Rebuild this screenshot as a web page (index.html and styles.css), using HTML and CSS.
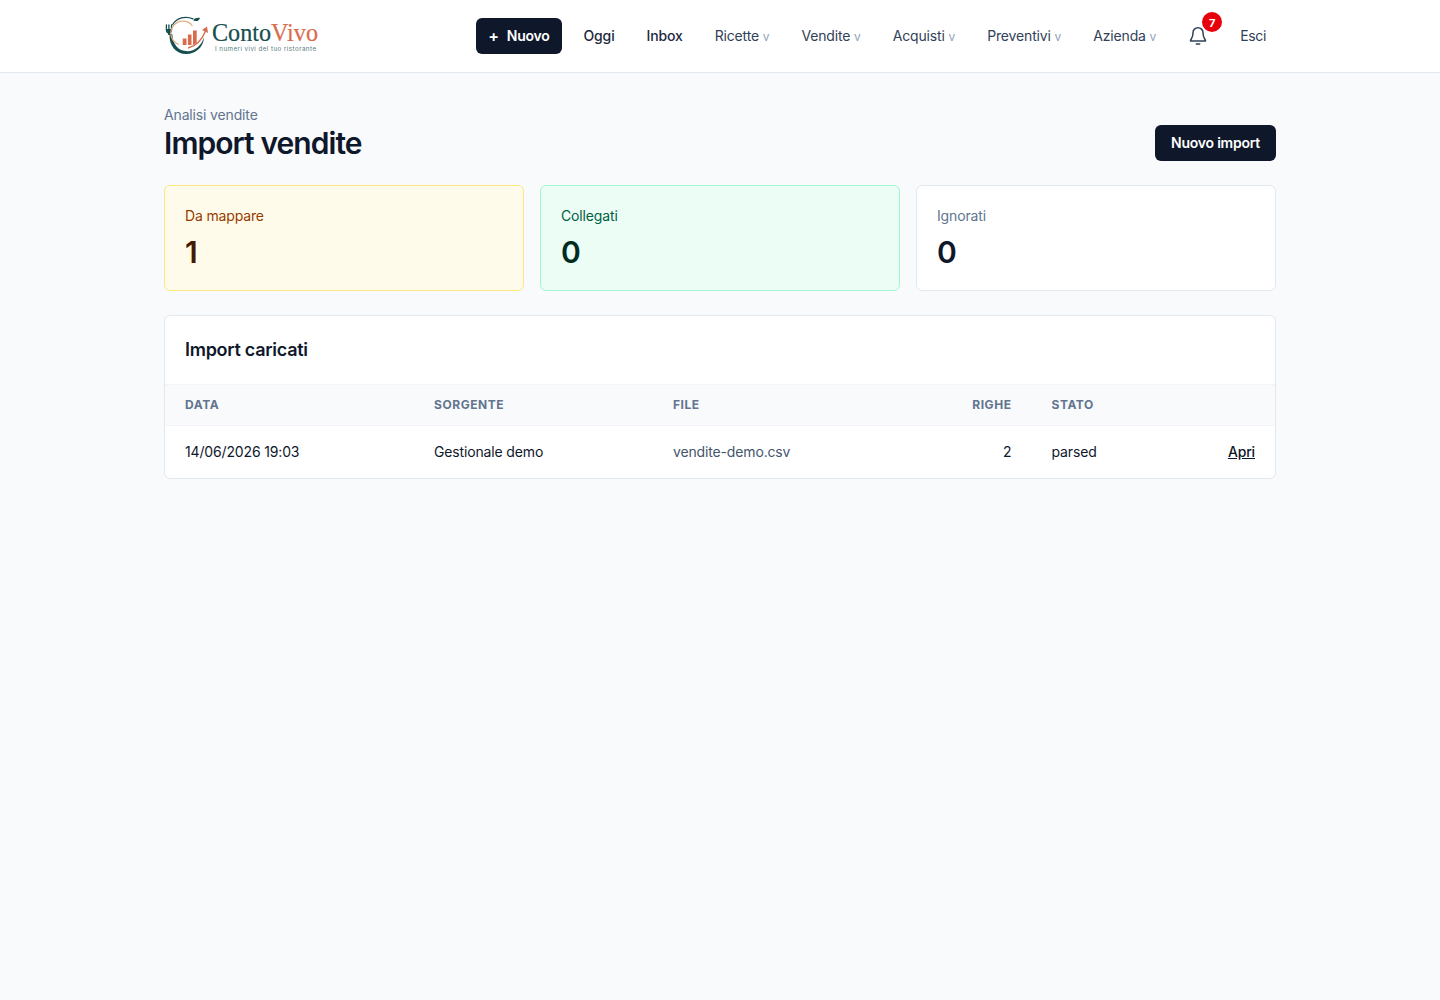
FILE: index.html
```
<!DOCTYPE html>
<html lang="it">
<head>
    <meta charset="UTF-8">
    <title>Import vendite - ContoVivo</title>
    <link rel="stylesheet" href="styles.css">
</head>
<body>
    <header class="header">
        <div class="container header-inner">
            <a class="logo" href="#">
                <svg width="160" height="44" viewBox="0 0 160 44">
                    <!-- Plate, fork and leaf -->
                    <path d="M8.700 10.500C13 4 21 1.500 29 4.800" fill="none" stroke="#164e50" stroke-width="1.300" stroke-linecap="round"/>
                    <path d="M5.500 20C5 32 12 40 22 40C32 40 39.500 33 40 23.500C37 32 31 37.200 23.500 37.200C14 37.200 8.500 30 8.300 20Z" fill="#164e50"/>
                    <path d="M2.400 11V16Q2.400 18.800 4.900 18.800Q7.500 18.800 7.500 16V11M4.900 11V20" fill="none" stroke="#164e50" stroke-width="1.300" stroke-linecap="round"/>
                    <path d="M2.400 15H7.500L6 21H4.500Z" fill="#164e50"/>
                    <path d="M29.500 6.500C29.500 4.500 32 3.500 36 3.700C35 6.500 33 8 29.500 6.500Z" fill="#164e50"/>
                    <path d="M28.500 12A12 12 0 1 0 15 30.500" fill="none" stroke="#e0b080" stroke-width="1.200"/>
                    <!-- Bars and arrow -->
                    <path d="M18.700 24.500H22.500V31H18.700ZM23.900 20.500H27.500V31H23.900ZM29 16.500H32.700V29L29 31Z" fill="#d96c4d"/>
                    <path d="M24 34C32 32 38 26 41.500 17" fill="none" stroke="#d96c4d" stroke-width="1.400"/>
                    <path d="M43 12.500L44 19L38 16Z" fill="#d96c4d"/>
                    <text class="logo-name" x="48" y="27" textLength="106" lengthAdjust="spacingAndGlyphs">Conto<tspan class="logo-accent">Vivo</tspan></text>
                    <text class="logo-tagline" x="51" y="36.500" textLength="101">I numeri vivi del tuo ristorante</text>
                </svg>
            </a>
            <nav class="nav">
                <a class="btn btn-new" href="#"><span class="plus">+</span><span>Nuovo</span></a>
                <a class="nav-link strong" href="#">Oggi</a>
                <a class="nav-link strong" href="#">Inbox</a>
                <a class="nav-link" href="#">Ricette <span class="caret">v</span></a>
                <a class="nav-link" href="#">Vendite <span class="caret">v</span></a>
                <a class="nav-link" href="#">Acquisti <span class="caret">v</span></a>
                <a class="nav-link" href="#">Preventivi <span class="caret">v</span></a>
                <a class="nav-link" href="#">Azienda <span class="caret">v</span></a>
                <a class="bell" href="#">
                    <svg width="20" height="20" viewBox="0 0 24 24" fill="none" stroke="currentColor" stroke-width="1.800" stroke-linecap="round" stroke-linejoin="round">
                        <path d="M18 8a6 6 0 0 0-12 0c0 7-3 7.500-3 10h18c0-2.500-3-3-3-10"/>
                        <path d="M10 21.500h4"/>
                    </svg>
                    <span class="badge">7</span>
                </a>
                <a class="nav-link logout" href="#">Esci</a>
            </nav>
        </div>
    </header>

    <main class="container main">
        <div class="page-head">
            <div>
                <p class="eyebrow">Analisi vendite</p>
                <h1>Import vendite</h1>
            </div>
            <a class="btn" href="#">Nuovo import</a>
        </div>

        <div class="stats">
            <div class="stat amber">
                <p class="stat-label">Da mappare</p>
                <p class="stat-value">1</p>
            </div>
            <div class="stat green">
                <p class="stat-label">Collegati</p>
                <p class="stat-value">0</p>
            </div>
            <div class="stat">
                <p class="stat-label">Ignorati</p>
                <p class="stat-value">0</p>
            </div>
        </div>

        <section class="panel">
            <h2>Import caricati</h2>
            <table>
                <colgroup>
                    <col class="col-data">
                    <col class="col-sorgente">
                    <col class="col-file">
                    <col class="col-righe">
                    <col class="col-stato">
                    <col>
                </colgroup>
                <thead>
                    <tr>
                        <th>Data</th>
                        <th>Sorgente</th>
                        <th>File</th>
                        <th class="right">Righe</th>
                        <th>Stato</th>
                        <th></th>
                    </tr>
                </thead>
                <tbody>
                    <tr>
                        <td>14/06/2026 19:03</td>
                        <td>Gestionale demo</td>
                        <td class="muted">vendite-demo.csv</td>
                        <td class="right">2</td>
                        <td>parsed</td>
                        <td class="right"><a class="open" href="#">Apri</a></td>
                    </tr>
                </tbody>
            </table>
        </section>
    </main>
</body>
</html>
```
FILE: styles.css
```
* {
    box-sizing: border-box;
}

body {
    margin: 0;
    background-color: #f8fafc;
    color: #0f172b;
    font-family: Inter, "Liberation Sans", sans-serif;
    font-size: 14px;
    line-height: 20px;
    letter-spacing: -0.15px;
}

h1, h2, p {
    margin: 0;
}

a {
    color: inherit;
    text-decoration: none;
}

.container {
    width: 1112px;
    margin: 0 auto;
}

/* Top bar */
.header {
    background-color: white;
    border-bottom: 1px solid #e2e8f0;
}

.header-inner {
    display: flex;
    justify-content: space-between;
    align-items: center;
    height: 72px;
}

.logo svg {
    display: block;
}

.logo-name {
    font-family: "Liberation Serif", serif;
    font-size: 25px;
    letter-spacing: 0;
    fill: #164e50;
    stroke: #164e50;
    stroke-width: 0.2px;
}

.logo-accent {
    fill: #d96c4d;
    stroke: #d96c4d;
}

.logo-tagline {
    font-size: 6.2px;
    letter-spacing: 0;
    fill: #57797a;
}

.nav {
    display: flex;
    align-items: center;
    gap: 12px;
}

.nav-link {
    padding: 8px 10px;
    color: #314158;
}

.strong {
    color: #1d293d;
    font-weight: 500;
}

.logout {
    letter-spacing: -0.35px;
}

.caret {
    color: #90a1b9;
    font-size: 12px;
}

.btn {
    padding: 8px 16px;
    border-radius: 6px;
    background-color: #0f172b;
    color: white;
    font-weight: 600;
    letter-spacing: -0.24px;
}

.btn-new {
    display: flex;
    gap: 8px;
    padding: 8px 12px;
}

.plus {
    font-size: 16px;
}

.bell {
    position: relative;
    display: flex;
    justify-content: center;
    align-items: center;
    width: 40px;
    height: 40px;
    color: #314158;
}

.badge {
    position: absolute;
    top: -4px;
    right: -4px;
    width: 20px;
    height: 20px;
    border-radius: 50%;
    background-color: #e7000b;
    color: white;
    font-size: 11px;
    font-weight: 700;
    line-height: 22px;
    text-align: center;
}

/* Page title */
.main {
    padding-top: 32px;
}

.page-head {
    display: flex;
    justify-content: space-between;
    align-items: flex-end;
    margin-bottom: 24px;
}

.eyebrow {
    color: #62748e;
}

h1 {
    font-size: 30px;
    font-weight: 600;
    letter-spacing: -0.93px;
    line-height: 36px;
}

/* Counters */
.stats {
    display: grid;
    grid-template-columns: repeat(3, 1fr);
    gap: 16px;
    margin-bottom: 24px;
}

.stat {
    padding: 20px;
    border: 1px solid #e2e8f0;
    border-radius: 6px;
    background-color: white;
}

.stat-label {
    color: #62748e;
}

.stat-value {
    margin-top: 8px;
    font-size: 30px;
    font-weight: 600;
    line-height: 36px;
}

.amber {
    border-color: #fee685;
    background-color: #fffbeb;
    color: #461901;
}

.amber .stat-label {
    color: #973c00;
}

.green {
    border-color: #a4f4cf;
    background-color: #ecfdf5;
    color: #002c22;
}

.green .stat-label {
    color: #006045;
}

/* Imports table */
.panel {
    overflow: hidden;
    border: 1px solid #e2e8f0;
    border-radius: 6px;
    background-color: white;
}

h2 {
    padding: 20px;
    border-bottom: 1px solid #f1f5f9;
    font-size: 18px;
    font-weight: 600;
    letter-spacing: -0.27px;
    line-height: 28px;
}

table {
    width: 100%;
    border-spacing: 0;
    table-layout: fixed;
}

.col-data {
    width: 249px;
}

.col-sorgente {
    width: 239px;
}

.col-file {
    width: 286px;
}

.col-righe {
    width: 92.500px;
}

.col-stato {
    width: 85px;
}

th {
    height: 41px;
    padding: 0 20px;
    border-bottom: 1px solid #f1f5f9;
    background-color: #f8fafc;
    color: #62748e;
    font-size: 12px;
    font-weight: 700;
    letter-spacing: 0.55px;
    text-align: left;
    text-transform: uppercase;
}

td {
    padding: 16px 20px;
}

.right {
    text-align: right;
}

.muted {
    color: #45556c;
}

.open {
    font-weight: 500;
    text-decoration: underline;
}
```
